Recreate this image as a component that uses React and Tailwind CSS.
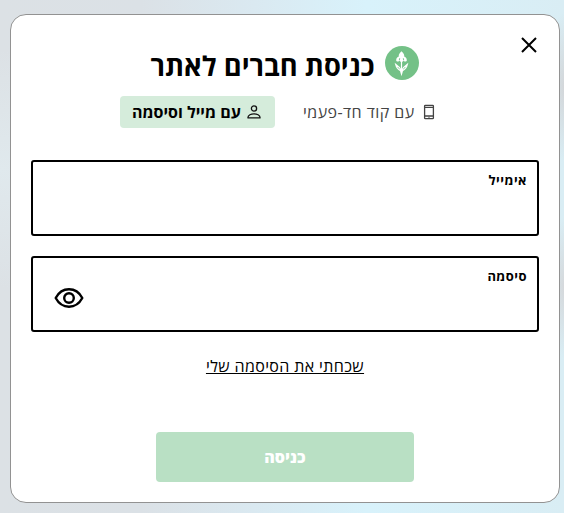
const tabs = [
  { id: "code", label: "עם קוד חד-פעמי", icon: PhoneIcon },
  { id: "email", label: "עם מייל וסיסמה", icon: UserIcon },
];

function PhoneIcon() {
  return (
    <svg width="12" height="16" viewBox="0 0 12 16" fill="none" stroke="#444" strokeWidth="1.3" className="shrink-0">
      <rect x="1.6" y="1.3" width="8.8" height="13.4" rx="0.8" />
      <path d="M1.5 3.4h9M1.5 12h9" />
      <path d="M5.3 13.3h1.4" strokeWidth=".8" />
    </svg>
  );
}

function UserIcon() {
  return (
    <svg width="14" height="14" viewBox="0 0 14 14" fill="none" stroke="#111" strokeWidth="1.3" className="shrink-0">
      <circle cx="7" cy="3.5" r="2.6" />
      <path d="M1 12.9v-.6c0-2.1 3-3.5 6-3.5s6 1.4 6 3.5v.6z" strokeLinejoin="round" />
    </svg>
  );
}

function CloseIcon() {
  return (
    <svg width="16" height="16" viewBox="0 0 16 16" fill="none" stroke="#000" strokeWidth="2">
      <path d="M1 1l14 14M15 1L1 15" />
    </svg>
  );
}

function EyeIcon() {
  return (
    <svg width="30" height="20" viewBox="0 0 30 20" fill="none" stroke="#000" strokeWidth="2.4">
      <path d="M1.7 10C4.6 4.6 9 1.3 15 1.3S25.4 4.6 28.3 10C25.4 15.4 21 18.7 15 18.7S4.6 15.4 1.7 10z" strokeLinejoin="round" />
      <circle cx="15" cy="10" r="4.8" />
    </svg>
  );
}

function Logo() {
  return (
    <svg width="34" height="34" viewBox="0 0 34 34" className="shrink-0">
      <circle cx="17" cy="17" r="17" fill="#74c187" />
      <g fill="#fff">
        <path d="M16.5 5.2c1.7 1.6 3.1 3.2 2.7 5.2 2 .6 3 2.6 2.5 4.7-1.4.9-2.9.6-3.6-.6-.2 1-.8 1.6-1.6 1.6s-1.4-.6-1.6-1.6c-.7 1.2-2.2 1.5-3.6.6-.5-2.1.5-4.1 2.5-4.7-.4-2 1-3.6 2.7-5.2z" />
        <path d="M15.9 14.5h1.2v11h-1.2z" />
      </g>
      <path
        d="M10.6 18.2c.8 3.4 2.3 5.300 4.900 6.400l1 3.400 1-3.400c2.600-1.100 4.100-3 4.900-6.400-2.300 1.600-4.300 3.500-5.900 6.300-1.600-2.800-3.600-4.700-5.900-6.300z"
        fill="none"
        stroke="#fff"
        strokeWidth="1.2"
      />
      <path d="M14.7 12.2l-.4 2M18.3 12.2l.4 2" stroke="#74c187" strokeWidth=".9" />
    </svg>
  );
}

function Field({ label, type, children }) {
  return (
    <label className="flex h-[76px] flex-col rounded-[3px] border-2 border-black px-2.5 pt-2">
      <span className="text-[13px] leading-5 font-bold tracking-[0.45px]">{label}</span>
      <span className="flex h-6 items-center">
        <input type={type} className="min-w-0 flex-1 outline-none" />
        {children}
      </span>
    </label>
  );
}

export default function App() {
  return (
    <main
      dir="rtl"
      className="h-[513px] w-full overflow-hidden bg-[radial-gradient(ellipse_16px_75px_at_100%_17%,#d3d6d9,transparent),radial-gradient(ellipse_16px_70px_at_100%_56%,#d5d8db,transparent),radial-gradient(ellipse_160px_120px_at_0%_33%,#e0e9ed,transparent),linear-gradient(to_right,#dce1e5_0%,#dbe1e6_25%,#dae9f1_45%,#d8f2fb_65%,#d9edf4_100%)] pt-3.5 pr-1 pl-2.5 font-['Open_Sans','Noto_Sans',sans-serif] text-black"
    >
      <section className="relative h-[489px] rounded-2xl border border-[#929292] bg-white px-5 pt-[31px]">
        <button className="absolute top-[22px] right-[22px]" aria-label="סגירה">
          <CloseIcon />
        </button>

        <header className="flex h-[34px] items-center justify-center gap-[11px]">
          <Logo />
          <h1 className="pt-[5px] text-[27.3px] leading-[34px] font-bold whitespace-nowrap">
            כניסת חברים לאתר
          </h1>
        </header>

        <nav className="mt-4 flex justify-center gap-3">
          {tabs.map(({ id, label, icon: Icon }) => (
            <button
              key={id}
              className={
                id === "email"
                  ? "flex h-8 w-[155px] items-center justify-end gap-1.5 rounded bg-[#d5ecdb] pl-3 text-base font-bold whitespace-nowrap"
                  : "flex h-8 w-[163px] items-center justify-end gap-2 pl-4 text-base tracking-[0.45px] whitespace-nowrap text-[#444]"
              }
            >
              <Icon />
              <span>{label}</span>
            </button>
          ))}
        </nav>

        <form className="mt-8">
          <div className="flex flex-col gap-5">
            <Field label="אימייל" type="email" />
            <Field label="סיסמה" type="password">
              <button type="button" className="ml-[11px]" aria-label="הצגת סיסמה">
                <EyeIcon />
              </button>
            </Field>
          </div>

          <div className="mt-[22px] text-center text-base leading-6 tracking-[0.37px]">
            <a href="#" className="underline">שכחתי את הסיסמה שלי</a>
          </div>

          <button
            type="button"
            className="mx-auto mt-[54px] block h-[50px] w-[258px] rounded bg-[#b9e0c4] text-base font-extrabold text-white"
          >
            כניסה
          </button>
        </form>
      </section>
    </main>
  );
}
